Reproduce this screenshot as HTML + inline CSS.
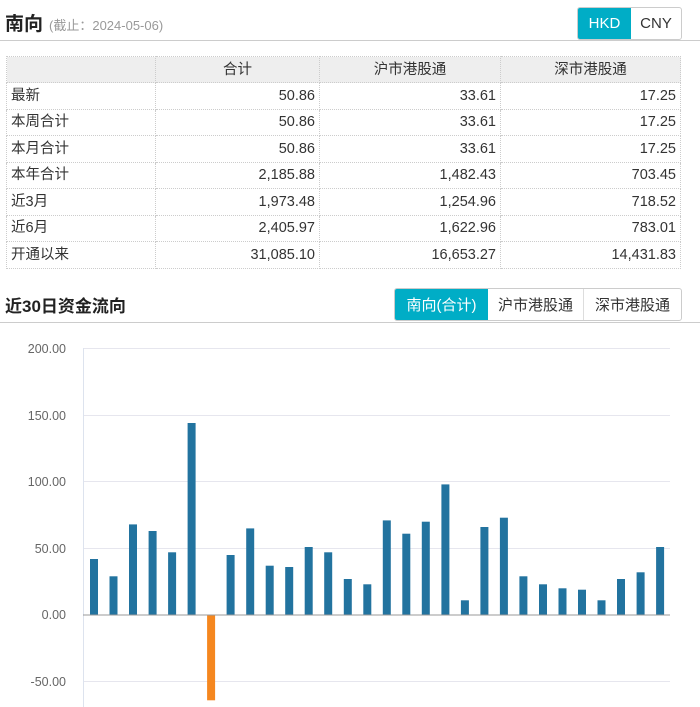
<!DOCTYPE html>
<html><head><meta charset="utf-8"><style>
body{margin:0;width:700px;height:707px;background:#fff;font-family:"Liberation Sans","Noto Sans CJK SC",sans-serif;position:relative;overflow:hidden;color:#333}
.abs{position:absolute}
.t1{left:5px;top:9px;font-size:19px;font-weight:bold;color:#222}
.t1 span{font-size:13px;font-weight:normal;color:#999;margin-left:6px}
.line{left:0;width:700px;height:1px;background:#ccc}
.btns{display:flex;border:1px solid #ccc;border-radius:3px;overflow:hidden}
.btns div{font-size:15px;display:flex;align-items:center;justify-content:center;color:#333;border-left:1px solid #ddd}
.btns div.on{background:#00adc6;color:#fff;border-left:none}
table{position:absolute;left:6px;top:56px;border-collapse:collapse;font-size:14.5px}
td{border:1px dotted #ccc;height:25.5px;padding:0 4px;text-align:right;line-height:16px;vertical-align:middle}
td:first-child{text-align:left;width:140px}
tr.h td{background:#eee;text-align:center;height:25px}
</style></head><body>
<div class="abs t1">南向<span>(截止：2024-05-06)</span></div>
<div class="abs btns" style="left:577px;top:7px;height:31px"><div class="on" style="width:53px">HKD</div><div style="width:50px;border-left:none">CNY</div></div>
<div class="abs line" style="top:40px"></div>
<table>
<tr class="h"><td></td><td style="width:155px">合计</td><td style="width:172px">沪市港股通</td><td style="width:171px">深市港股通</td></tr>
<tr><td>最新</td><td>50.86</td><td>33.61</td><td>17.25</td></tr>
<tr><td>本周合计</td><td>50.86</td><td>33.61</td><td>17.25</td></tr>
<tr><td>本月合计</td><td>50.86</td><td>33.61</td><td>17.25</td></tr>
<tr><td>本年合计</td><td>2,185.88</td><td>1,482.43</td><td>703.45</td></tr>
<tr><td>近3月</td><td>1,973.48</td><td>1,254.96</td><td>718.52</td></tr>
<tr><td>近6月</td><td>2,405.97</td><td>1,622.96</td><td>783.01</td></tr>
<tr><td>开通以来</td><td>31,085.10</td><td>16,653.27</td><td>14,431.83</td></tr>
</table>
<div class="abs" style="left:5px;top:292px;font-size:17px;font-weight:bold;color:#222">近30日资金流向</div>
<div class="abs btns" style="left:394px;top:288px;height:31px"><div class="on" style="width:93px">南向(合计)</div><div style="width:95px;border-left:none">沪市港股通</div><div style="width:97px">深市港股通</div></div>
<div class="abs line" style="top:322px"></div>
<svg class="abs" style="left:0;top:0" width="700" height="707">
<g stroke="#e6e6ee" stroke-width="1">
<line x1="83" x2="670" y1="348.5" y2="348.5"/><line x1="83" x2="670" y1="415.5" y2="415.5"/><line x1="83" x2="670" y1="481.5" y2="481.5"/><line x1="83" x2="670" y1="548.5" y2="548.5"/><line x1="83" x2="670" y1="681.5" y2="681.5"/>
<line x1="83.5" x2="83.5" y1="348" y2="707" stroke="#dde3ee"/>
</g>
<g font-size="12.5" fill="#666" text-anchor="end" font-family="Liberation Sans,sans-serif">
<text x="66" y="353">200.00</text><text x="66" y="420">150.00</text><text x="66" y="486">100.00</text><text x="66" y="553">50.00</text><text x="66" y="619">0.00</text><text x="66" y="686">-50.00</text>
</g>
<g id="bars"></g>
<line x1="83" x2="670" y1="615" y2="615" stroke="#999"/>
</svg>
<script>
var v=[42,29,68,63,47,144,-64,45,65,37,36,51,47,27,23,71,61,70,98,11,66,73,29,23,20,19,11,27,32,51];
var g=document.getElementById('bars'),s='';
v.forEach(function(d,i){var x=90+i*19.52,h=Math.abs(d)*1.333;var y=d>=0?615-h:615;
s+='<rect x="'+x.toFixed(1)+'" y="'+y.toFixed(1)+'" width="8" height="'+h.toFixed(1)+'" fill="'+(d>=0?'#22739f':'#f5871f')+'"/>';});
g.innerHTML=s;
</script>
</body></html>
